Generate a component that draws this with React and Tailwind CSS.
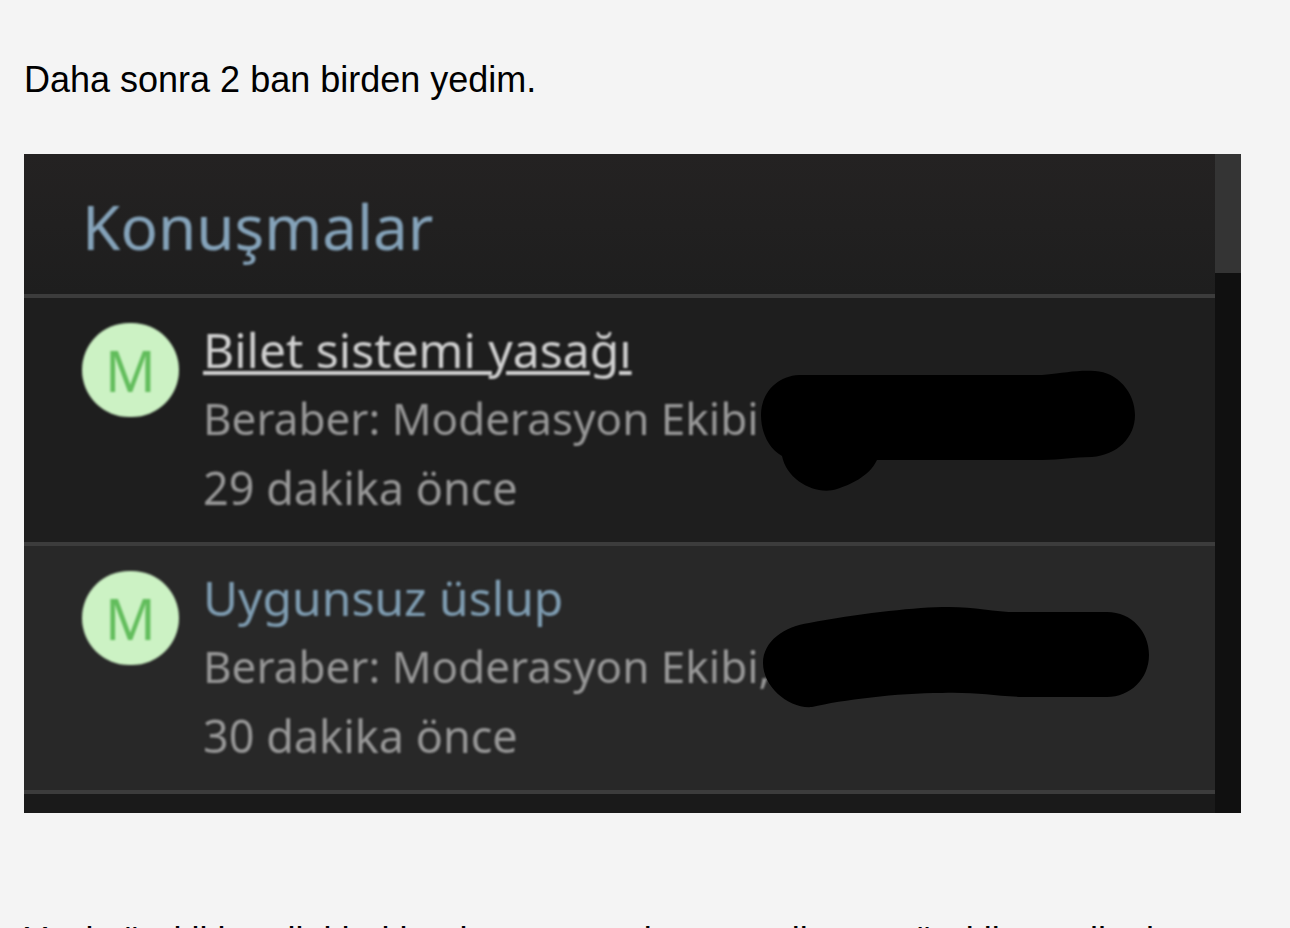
import React from "react";

const conversations = [
  {
    id: 1,
    title: "Bilet sistemi yasağı",
    titleClass: "text-[#d0d0d0] underline decoration-[4px] underline-offset-[3px]",
    rowClass: "bg-[#1e1e1e]",
    time: "29 dakika önce",
    members: "Beraber: Moderasyon Ekibi",
    scribbleClass: "top-[67px]",
    scribble:
      "M42 10 H285 C310 8 318 5 338 6 C360 7 378 27 378 50 C378 73 360 90 335 92 C315 92 305 95 285 95 H120 C112 112 92 120 80 124 C60 131 30 116 25 91 C12 84 4 68 4 50 C4 28 20 11 42 10 Z",
  },
  {
    id: 2,
    title: "Uygunsuz üslup",
    titleClass: "text-[#7f9db2]",
    rowClass: "bg-[#282828]",
    time: "30 dakika önce",
    members: "Beraber: Moderasyon Ekibi,",
    scribbleClass: "top-[57px]",
    scribble:
      "M52 20 C100 11 150 5 185 4 C215 3 235 9 260 9 H350 C375 9 392 29 392 52 C392 76 373 94 350 94 H265 C235 93 220 89 185 90 C140 90 85 97 55 104 C32 106 6 84 6 60 C6 38 28 23 52 20 Z",
  },
];

function Conversation({ item }) {
  return (
    <li className={`relative border-b-4 border-[#3c3c3c] pl-[58px] pt-[17px] pb-5 ${item.rowClass}`}>
      <div className="flex gap-6 blur-[1px]">
        <div className="mt-2 flex h-[94px] w-[97px] shrink-0 items-center justify-center rounded-full bg-[#ccf2c4] text-[56px] leading-none text-[#62bd5c]">
          M
        </div>
        <div className="min-w-0 whitespace-nowrap leading-[69px] text-[#989898]">
          <a href="#" className={`block text-[48px] ${item.titleClass}`}>
            {item.title}
          </a>
          <p className="text-[44px]">{item.members}</p>
          <p className="text-[45px]">{item.time}</p>
        </div>
      </div>
      {/* Marker stroke over the member name */}
      <svg
        className={`absolute left-[733px] ${item.scribbleClass}`}
        width="400"
        height="130"
        viewBox="0 0 400 130"
        aria-hidden="true"
      >
        <path d={item.scribble} fill="#000" />
      </svg>
    </li>
  );
}

export default function App() {
  return (
    <main className="h-screen overflow-hidden bg-[#f4f4f4] pl-6 pr-[49px] pt-14 font-['Liberation_Sans',Arial,sans-serif] text-[36px] leading-[48px] text-black">
      <p>Daha sonra 2 ban birden yedim.</p>

      <section className="mt-[50px] flex bg-[#1a1a1a] font-['Noto_Sans','Open_Sans',sans-serif]">
        <div className="min-w-0 flex-1 overflow-hidden pb-[19px]">
          <div className="border-b-4 border-[#3c3c3c] bg-linear-to-b from-[#242222] to-[#1e1e1e] px-[58px] pt-[34px] pb-[30px]">
            <h2 className="text-[62px] leading-[76px] text-[#85a3ba] blur-[1px]">Konuşmalar</h2>
          </div>
          <ul>
            {conversations.map((item) => (
              <Conversation key={item.id} item={item} />
            ))}
          </ul>
        </div>
        {/* Scrollbar */}
        <div className="w-[26px] shrink-0 bg-[#101010]">
          <div className="h-[119px] bg-[#343434]" />
        </div>
      </section>

      <p className="mt-[104px] whitespace-nowrap">
        Yani sürekli kendini hakkında savunmak yenmedim ve sürekli engelleniyorum
      </p>
    </main>
  );
}
